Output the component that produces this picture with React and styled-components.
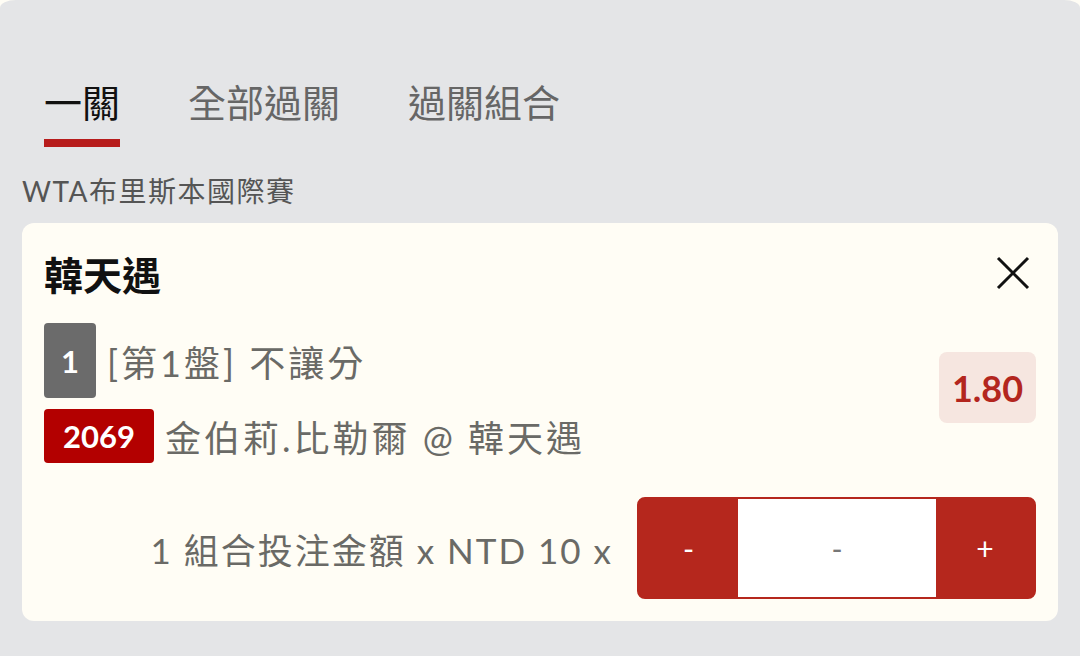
import React from "react";
import styled, { createGlobalStyle } from "styled-components";

const GlobalStyle = createGlobalStyle`
  html, body {
    margin: 0;
    padding: 0;
    background: #fffdf5;
    font-family: Lato, "Noto Sans CJK TC", sans-serif;
  }
`;

const Sheet = styled.div`
  background: #e4e5e7;
  border-radius: 16px 16px 0 0 / 8px 8px 0 0;
  min-height: 656px;
  box-sizing: border-box;
  padding: 83px 22px 0 22px;
`;

const Tabs = styled.div`
  display: flex;
  gap: 68px;
  padding-left: 22px;
`;

const Tab = styled.div`
  display: flex;
  flex-direction: column;
  align-items: stretch;
  font-size: 38px;
  line-height: 1;
  color: ${(props) => (props.active ? "#111" : "#666")};

  &::after {
    content: "";
    display: block;
    height: 8px;
    margin-top: 18px;
    background: ${(props) => (props.active ? "#b71c1c" : "transparent")};
  }
`;

const League = styled.div`
  margin-top: 28px;
  font-size: 28px;
  letter-spacing: 1.5px;
  line-height: 32px;
  color: #555;
`;

const Card = styled.div`
  margin-top: 16px;
  background: #fffdf5;
  border-radius: 12px;
  padding: 30px 22px 22px 22px;
`;

const Header = styled.div`
  display: flex;
  align-items: center;
  justify-content: space-between;
  height: 40px;
`;

const Title = styled.div`
  font-size: 39px;
  font-weight: 700;
  color: #111;
`;

const Close = styled.button`
  border: none;
  background: none;
  padding: 0;
  margin-right: 6px;
  width: 34px;
  height: 34px;
  display: flex;
`;

const Selection = styled.div`
  display: flex;
  align-items: center;
  justify-content: space-between;
  margin-top: 30px;
`;

const Lines = styled.div`
  display: flex;
  flex-direction: column;
  gap: 11px;
`;

const Line = styled.div`
  display: flex;
  align-items: center;
  gap: 11px;
  font-size: 36px;
  letter-spacing: 3px;
  color: #6a6a66;
`;

const Badge = styled.span`
  display: flex;
  align-items: center;
  justify-content: center;
  box-sizing: border-box;
  height: ${(props) => props.h}px;
  min-width: 52px;
  padding: 0 ${(props) => props.pad || 0}px;
  border-radius: 4px;
  background: ${(props) => props.bg};
  color: #fff;
  font-weight: 700;
  font-size: 31px;
  letter-spacing: 0;
`;

const Odds = styled.div`
  display: flex;
  align-items: center;
  justify-content: center;
  width: 97px;
  height: 71px;
  margin-bottom: 11px;
  border-radius: 8px;
  background: #f6e6e0;
  color: #b3261e;
  font-weight: 700;
  font-size: 36px;
`;

const Footer = styled.div`
  display: flex;
  align-items: center;
  justify-content: flex-end;
  gap: 24px;
  margin-top: 34px;
`;

const Amount = styled.div`
  font-size: 35px;
  letter-spacing: 2px;
  color: #6a6a66;
`;

const Stepper = styled.div`
  display: grid;
  grid-template-columns: 99px 1fr 98px;
  width: 399px;
  height: 102px;
  box-sizing: border-box;
  border: 2px solid #b5271d;
  border-radius: 8px;
  overflow: hidden;
  background: #b5271d;
`;

const StepButton = styled.div`
  display: flex;
  align-items: center;
  justify-content: center;
  color: ${(props) => (props.muted ? "#777" : "#fff")};
  background: ${(props) => (props.muted ? "#fff" : "#b5271d")};
  font-size: 30px;
`;

export default function App() {
  return (
    <>
      <GlobalStyle />
      <Sheet>
        <Tabs>
          <Tab active>一關</Tab>
          <Tab>全部過關</Tab>
          <Tab>過關組合</Tab>
        </Tabs>
        <League>WTA布里斯本國際賽</League>
        <Card>
          <Header>
            <Title>韓天遇</Title>
            <Close aria-label="close">
              <svg width="34" height="34" viewBox="0 0 34 34">
                <path d="M2 2L32 32M32 2L2 32" stroke="#111" strokeWidth="3" fill="none" />
              </svg>
            </Close>
          </Header>
          <Selection>
            <Lines>
              <Line>
                <Badge h={75} bg="#6b6b6b">1</Badge>
                <span>[第1盤] 不讓分</span>
              </Line>
              <Line>
                <Badge h={54} pad={19} bg="#b30000">2069</Badge>
                <span>金伯莉.比勒爾 @ 韓天遇</span>
              </Line>
            </Lines>
            <Odds>1.80</Odds>
          </Selection>
          <Footer>
            <Amount>1 組合投注金額 x NTD 10 x</Amount>
            <Stepper>
              <StepButton>-</StepButton>
              <StepButton muted>-</StepButton>
              <StepButton>+</StepButton>
            </Stepper>
          </Footer>
        </Card>
      </Sheet>
    </>
  );
}
